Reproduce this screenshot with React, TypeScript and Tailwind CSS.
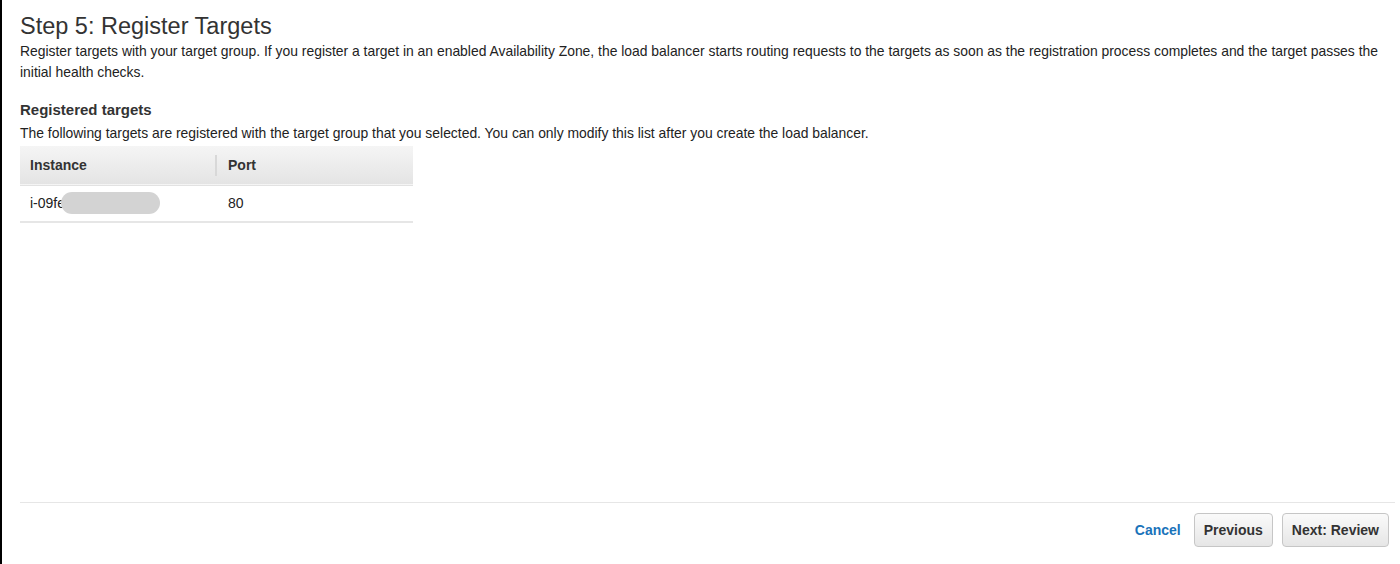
import React from "react";

export default function App() {
  return (
    <div className="h-[564px] w-[1400px] border-l-2 border-black bg-white font-['Liberation_Sans',Arial,sans-serif] text-[#333]">
      <div className="flex h-full flex-col pl-[18px] pr-[5px]">
        <h1 className="mt-[12px] text-[23.5px] leading-[28px] text-[#333]">Step 5: Register Targets</h1>
        <p className="mt-[1px] text-[13.9px] leading-[21px] text-[#222]">
          Register targets with your target group. If you register a target in an enabled Availability Zone, the load balancer starts routing requests to the targets as soon as the registration process completes and the target passes the initial health checks.
        </p>
        <h2 className="mt-[16px] text-[15px] font-bold leading-[22px] text-[#333]">Registered targets</h2>
        <p className="mt-[2px] text-[13.9px] leading-[20px] text-[#222]">
          The following targets are registered with the target group that you selected. You can only modify this list after you create the load balancer.
        </p>
        <table className="mt-[3px] w-[393px] border-collapse text-[14px]">
          <thead>
            <tr className="h-[39px] border-b border-[#e2e2e2] bg-gradient-to-b from-[#f5f5f5] to-[#e4e4e4]">
              <th className="w-[198px] pl-[10px] pr-[1px] text-left font-bold text-[#333]">
                <div className="border-r-2 border-[#d8d8d8]">Instance</div>
              </th>
              <th className="px-[10px] text-left font-bold text-[#333]">Port</th>
            </tr>
          </thead>
          <tbody>
            <tr className="h-[37px] border-b-2 border-[#e6e6e6]">
              <td className="px-[10px] text-[#222]">
                <div className="flex items-center">
                  <span>i-09fe</span>
                  <span className="ml-[-4px] h-[22px] w-[99px] rounded-full bg-[#d3d3d3]" />
                </div>
              </td>
              <td className="px-[10px] text-[#222]">80</td>
            </tr>
          </tbody>
        </table>
        <div className="flex-1" />
        <div className="border-t border-[#e6e6e6]" />
        <div className="flex items-center justify-end pb-[17px] pt-[10px] pr-[6px]">
          <button className="text-[14px] font-bold text-[#1a73ba]">Cancel</button>
          <button className="ml-[13px] h-[34px] rounded-[4px] border border-[#c6c6c6] bg-gradient-to-b from-[#fafafa] to-[#e6e6e6] px-[9px] text-[14px] font-bold text-[#333]">
            Previous
          </button>
          <button className="ml-[9px] h-[34px] rounded-[4px] border border-[#c6c6c6] bg-gradient-to-b from-[#fafafa] to-[#e6e6e6] px-[9px] text-[14px] font-bold text-[#333]">
            Next: Review
          </button>
        </div>
      </div>
    </div>
  );
}
